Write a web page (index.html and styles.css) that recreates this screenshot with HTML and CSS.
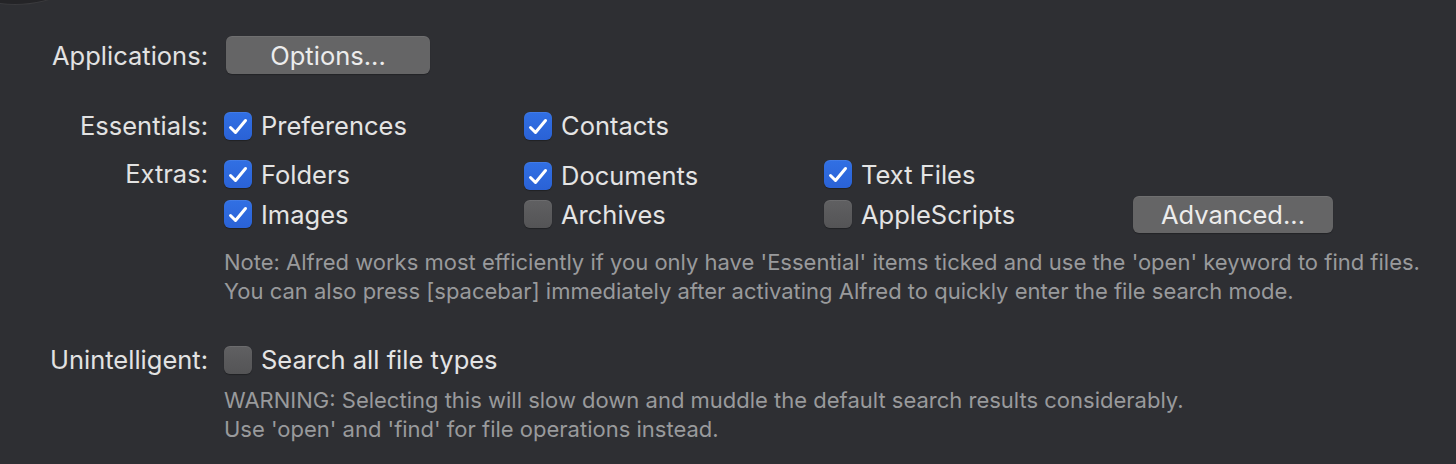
FILE: index.html
```html
<!DOCTYPE html>
<html>
<head>
<meta charset="utf-8">
<link rel="stylesheet" href="styles.css">
</head>
<body>
<div class="corner"></div>
<main class="page">
  <section class="row row-apps">
    <div class="label">Applications:</div>
    <div class="content"><button class="btn btn-options">Options...</button></div>
  </section>

  <section class="row row-essentials">
    <div class="label">Essentials:</div>
    <div class="content grid">
      <label class="cb"><span class="box on"><svg viewBox="0 0 28 28"><path d="M6.5 15.5 L11.5 20.5 L21.5 8.5"/></svg></span>Preferences</label>
      <label class="cb"><span class="box on"><svg viewBox="0 0 28 28"><path d="M6.5 15.5 L11.5 20.5 L21.5 8.5"/></svg></span>Contacts</label>
    </div>
  </section>

  <section class="row row-extras">
    <div class="label">Extras:</div>
    <div class="content grid extras">
      <label class="cb"><span class="box on"><svg viewBox="0 0 28 28"><path d="M6.5 15.5 L11.5 20.5 L21.5 8.5"/></svg></span>Folders</label>
      <label class="cb cb-low"><span class="box on"><svg viewBox="0 0 28 28"><path d="M6.5 15.5 L11.5 20.5 L21.5 8.5"/></svg></span>Documents</label>
      <label class="cb"><span class="box on"><svg viewBox="0 0 28 28"><path d="M6.5 15.5 L11.5 20.5 L21.5 8.5"/></svg></span>Text Files</label>
      <div></div>
      <label class="cb"><span class="box on"><svg viewBox="0 0 28 28"><path d="M6.5 15.5 L11.5 20.5 L21.5 8.5"/></svg></span>Images</label>
      <label class="cb"><span class="box"></span>Archives</label>
      <label class="cb"><span class="box"></span>AppleScripts</label>
      <div class="adv-cell"><button class="btn btn-adv">Advanced...</button></div>
    </div>
  </section>

  <section class="row row-note">
    <div></div>
    <p class="note">Note: Alfred works most efficiently if you only have 'Essential' items ticked and use the 'open' keyword to find files.<br>You can also press [spacebar] immediately after activating Alfred to quickly enter the file search mode.</p>
  </section>

  <section class="row row-unint">
    <div class="label">Unintelligent:</div>
    <div class="content">
      <label class="cb"><span class="box"></span>Search all file types</label>
    </div>
  </section>

  <section class="row row-warn">
    <div></div>
    <p class="note">WARNING: Selecting this will slow down and muddle the default search results considerably.<br>Use 'open' and 'find' for file operations instead.</p>
  </section>
</main>
</body>
</html>
```

FILE: styles.css
```css
html, body {
  margin: 0;
  padding: 0;
  background: #2e2f33;
  height: 100%;
  overflow: hidden;
}
body {
  font-family: Inter, "Liberation Sans", sans-serif;
  color: #e4e4e4;
  position: relative;
}
.corner {
  position: absolute;
  left: -60px;
  top: -88px;
  width: 150px;
  height: 92px;
  border-radius: 50%;
  background: #242427;
  border-bottom: 1px solid #3a3a3d;
}
.page {
  padding-top: 36px;
}
.row {
  display: grid;
  grid-template-columns: 208px 1fr;
  column-gap: 16px;
  align-items: center;
}
.label {
  text-align: right;
  font-size: 25.5px;
  color: #e2e2e2;
}
.row-apps { height: 38px; }
.row-essentials { margin-top: 36px; height: 28px; }
.row-extras { margin-top: 22px; align-items: start; }
.row-extras .label { line-height: 28px; }
.row-note { margin-top: 20px; }
.row-unint { margin-top: 38px; height: 28px; }
.row-warn { margin-top: 14px; }

.btn {
  font-family: inherit;
  font-size: 25.5px;
  color: #ececec;
  background: #656566;
  border: none;
  border-radius: 6px;
  padding: 0;
  display: flex;
  align-items: center;
  justify-content: center;
  box-shadow: inset 0 1px 0 rgba(255,255,255,0.07), 0 1px 1px rgba(0,0,0,0.25);
}
.btn-options { width: 204px; height: 38px; margin-left: 2px; }
.btn-adv { width: 200px; height: 37px; margin-left: 9px; }

.grid {
  display: grid;
  grid-template-columns: 300px 300px 300px auto;
  row-gap: 12px;
  align-items: center;
}
.extras { grid-auto-rows: 28px; }
.adv-cell { display: flex; align-items: center; height: 28px; }
.cb {
  display: flex;
  align-items: center;
  gap: 9px;
  font-size: 25.5px;
  color: #e4e4e4;
  height: 28px;
  white-space: nowrap;
}
.cb-low { margin-top: 3px; }
.box {
  width: 28px;
  height: 28px;
  border-radius: 6px;
  background: linear-gradient(#606062, #545456);
  box-shadow: inset 0 1px 0 rgba(255,255,255,0.08), 0 1px 1px rgba(0,0,0,0.3);
  flex: none;
  display: flex;
  align-items: center;
  justify-content: center;
}
.box.on {
  background: linear-gradient(#3170e4, #2a62d6);
}
.box svg {
  width: 28px;
  height: 28px;
}
.box svg path {
  fill: none;
  stroke: #ffffff;
  stroke-width: 3;
  stroke-linecap: round;
  stroke-linejoin: round;
}
.note {
  margin: 0;
  font-size: 22px;
  line-height: 29px;
  color: #999a9c;
  white-space: nowrap;
}
```
